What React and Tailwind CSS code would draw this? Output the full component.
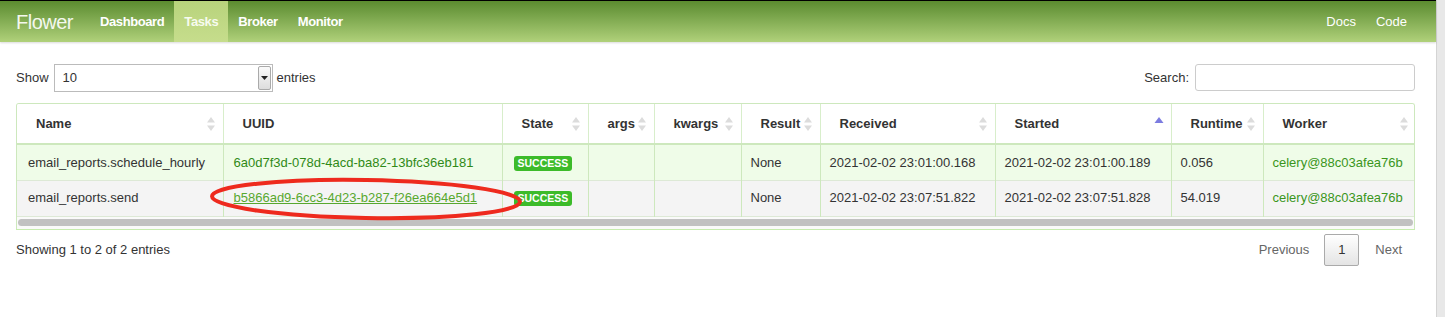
import React from "react";

const columns = [
  { label: "Name", width: "w-[206px]" },
  { label: "UUID", width: "w-[279px]", noSort: true },
  { label: "State", width: "w-[86px]" },
  { label: "args", width: "w-[66px]" },
  { label: "kwargs", width: "w-[87px]" },
  { label: "Result", width: "w-[79px]" },
  { label: "Received", width: "w-[175px]" },
  { label: "Started", width: "w-[176px]", sorted: true },
  { label: "Runtime", width: "w-[92px]" },
  { label: "Worker", width: "w-[153px]" },
];

const rows = [
  {
    name: "email_reports.schedule_hourly",
    uuid: "6a0d7f3d-078d-4acd-ba82-13bfc36eb181",
    received: "2021-02-02 23:01:00.168",
    started: "2021-02-02 23:01:00.189",
    runtime: "0.056",
    bg: "bg-[#effce8]",
  },
  {
    name: "email_reports.send",
    uuid: "b5866ad9-6cc3-4d23-b287-f26ea664e5d1",
    received: "2021-02-02 23:07:51.822",
    started: "2021-02-02 23:07:51.828",
    runtime: "54.019",
    bg: "bg-[#f4f4f4]",
    visited: true,
  },
];

const SortIcon = ({ active }) =>
  active ? (
    <svg width="10" height="14" viewBox="0 0 10 14" className="absolute right-[7px] top-[11px]">
      <path d="M5 2 L9.5 8 L0.5 8 Z" fill="#7c7ce0" />
    </svg>
  ) : (
    <svg width="10" height="16" viewBox="0 0 10 16" className="absolute right-[7px] top-[12px]">
      <path d="M5 1 L9 6.5 L1 6.5 Z" fill="#dcdcdc" />
      <path d="M5 15 L9 9.5 L1 9.5 Z" fill="#dcdcdc" />
    </svg>
  );

const Navbar = () => (
  <div className="h-[42px] border-t border-black bg-gradient-to-b from-[#5b8c2f] to-[#b0d17a] flex items-center text-white text-[13px] font-bold tracking-[-0.4px] shadow-[0_1px_2px_rgba(0,0,0,0.15)]">
    <span className="pl-4 pr-[17px] text-[20px] font-light text-[#f4f8ee] tracking-tight">Flower</span>
    <a className="px-[10px] h-full flex items-center">Dashboard</a>
    <a className="px-[10px] h-full flex items-center bg-gradient-to-b from-[#b8d37c] to-[#c6dd8c] text-[#f7fbef]">Tasks</a>
    <a className="px-[10px] h-full flex items-center">Broker</a>
    <a className="px-[10px] h-full flex items-center">Monitor</a>
    <div className="ml-auto flex h-full pr-[19px] tracking-normal">
      <a className="px-[10px] h-full flex items-center font-normal">Docs</a>
      <a className="px-[10px] h-full flex items-center font-normal">Code</a>
    </div>
  </div>
);

export default function App() {
  return (
    <div className="flex w-[1445px] h-[317px] bg-white overflow-hidden text-[13px] text-[#333] [font-family:'Liberation_Sans',Arial,sans-serif]">
      <div className="w-[1436px] relative">
        <Navbar />

        <div className="pl-4 pr-[21px] pt-[21px]">
          <div className="flex items-center justify-between h-[29px]">
            <div className="flex items-center">
              <span className="mr-[5px]">Show</span>
              <div className="w-[219px] h-[28px] border border-[#bbb] flex items-center pl-[8px] bg-white">
                <span className="flex-1">10</span>
                <div className="w-[13px] h-[24px] mr-[1px] border border-[#aaa] rounded-[2px] bg-gradient-to-b from-[#fafafa] to-[#ddd] flex items-center justify-center">
                  <svg width="7" height="4" viewBox="0 0 7 4"><path d="M0 0 L7 0 L3.5 4 Z" fill="#222" /></svg>
                </div>
              </div>
              <span className="ml-[4px]">entries</span>
            </div>
            <div className="flex items-center">
              <span className="mr-[6px]">Search:</span>
              <div className="w-[220px] h-[27px] border border-[#ccc] rounded-[3px] bg-white" />
            </div>
          </div>

          <div className="mt-[11px] border-l border-r border-t border-[#cde8bd] rounded-t-[3px] overflow-hidden">
            <table className="table-fixed border-collapse w-[1399px]">
              <thead>
                <tr className="h-[40px] bg-white border-b-2 border-[#cde8bd]">
                  {columns.map((c) => (
                    <th
                      key={c.label}
                      className={`${c.width} relative text-left font-bold text-[#333] pl-[19px] border-l border-[#d8eecb] first:border-l-0`}
                    >
                      {c.label}
                      {!c.noSort && <SortIcon active={c.sorted} />}
                    </th>
                  ))}
                </tr>
              </thead>
              <tbody>
                {rows.map((r) => (
                  <tr key={r.uuid} className={`h-[36px] ${r.bg} border-b border-[#dde9d6]`}>
                    <td className="pl-[11px]">{r.name}</td>
                    <td className="pl-[10px] border-l border-[#cde8bd]">
                      <a className={r.visited ? "text-[#58a82f] underline" : "text-[#2f8a17]"}>{r.uuid}</a>
                    </td>
                    <td className="pl-[11px] border-l border-[#cde8bd]">
                      <span className="inline-block bg-[#3cbb2a] text-white text-[10.5px] font-bold leading-[15px] px-[4px] rounded-[3px]">
                        SUCCESS
                      </span>
                    </td>
                    <td className="border-l border-[#cde8bd]" />
                    <td className="border-l border-[#cde8bd]" />
                    <td className="pl-[9px] border-l border-[#cde8bd]">None</td>
                    <td className="pl-[9px] border-l border-[#cde8bd]">{r.received}</td>
                    <td className="pl-[9px] border-l border-[#cde8bd]">{r.started}</td>
                    <td className="pl-[9px] border-l border-[#cde8bd]">{r.runtime}</td>
                    <td className="pl-[9px] border-l border-[#cde8bd]">
                      <a className="text-[#3a961c]">celery@88c03afea76b</a>
                    </td>
                  </tr>
                ))}
              </tbody>
            </table>
            <div className="h-[12px] bg-[#fafafa] flex items-center px-[1px]">
              <div className="h-[7px] w-full rounded-full bg-[#c1c1c1]" />
            </div>
          </div>
          <div className="h-[1px] bg-[#c6ecad]" />

          <div className="flex items-center justify-between mt-[4px]">
            <span className="text-[#333] mt-[1px]">Showing 1 to 2 of 2 entries</span>
            <div className="flex items-center text-[#666]">
              <span className="mr-[15px]">Previous</span>
              <span className="w-[35px] h-[32px] border border-[#aaa] rounded-[2px] bg-gradient-to-b from-[#fff] to-[#e4e4e4] flex items-center justify-center text-[#333]">
                1
              </span>
              <span className="ml-[16px] mr-[13px]">Next</span>
            </div>
          </div>
        </div>

        <svg
          width="320"
          height="50"
          viewBox="0 0 320 50"
          className="absolute left-[207px] top-[174px] pointer-events-none"
        >
          <ellipse cx="159" cy="25" rx="154" ry="19" fill="none" stroke="#ee2a1e" strokeWidth="4" transform="rotate(1 159 25)" />
        </svg>
      </div>
      <div className="w-[9px] h-full bg-[#e8e8e8] border-l border-[#d4d4d4]" />
    </div>
  );
}
